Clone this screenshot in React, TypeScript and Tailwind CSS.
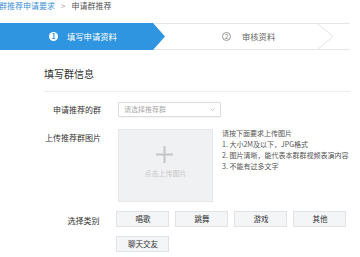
const categories = ["唱歌", "跳舞", "游戏", "其他", "聊天交友"];

const rules = [
  "请按下面要求上传图片",
  "1. 大小2M及以下，JPG格式",
  "2. 图片清晰，能代表本群群视频表演内容",
  "3. 不能有过多文字",
];

export default function App() {
  return (
    <div
      className="w-[360px] h-[257px] overflow-hidden bg-white text-[8px] text-[#333]"
      style={{ fontFamily: '"Noto Sans CJK SC", "Noto Sans", sans-serif' }}
    >
      {/* Breadcrumb */}
      <div className="h-[12px] flex items-center whitespace-nowrap leading-none">
        <span className="ml-[-1px] text-[#3d8fd8]">群推荐申请要求</span>
        <span className="ml-[6px] text-[#999]">&gt;</span>
        <span className="ml-[6px] text-[#555]">申请群推荐</span>
      </div>

      {/* Steps */}
      <div className="mt-[11px] w-[350px] h-[27px] border-y border-[#e6e6e6] flex">
        <div className="relative w-[153px] -my-px h-[27px] bg-[#2f95e0] flex items-center">
          <svg
            className="absolute left-[152px] top-0"
            width="14"
            height="27"
            viewBox="0 0 14 27"
          >
            <polygon points="0,0 1,0 13,13.5 1,27 0,27" fill="#2f95e0" />
          </svg>
          <span className="ml-[49px] w-[9px] h-[9px] rounded-full bg-white text-[#2f95e0] text-[7px] font-bold flex items-center justify-center leading-none">
            1
          </span>
          <span className="ml-[9px] text-white text-[8.3px] leading-none">填写申请资料</span>
        </div>
        <div className="relative flex-1 flex items-center">
          <span className="ml-[69px] w-[9px] h-[9px] rounded-full border border-[#999] text-[#888] text-[6.5px] flex items-center justify-center leading-none">
            2
          </span>
          <span className="ml-[11px] text-[#666] text-[8.3px] leading-none">审核资料</span>
          <svg
            className="absolute left-[165px] top-0"
            width="16"
            height="25"
            viewBox="0 0 16 25"
          >
            <polyline points="0,0 15,12.5 0,25" fill="none" stroke="#e3e3e3" strokeWidth="1" />
          </svg>
        </div>
      </div>

      {/* Section */}
      <div className="ml-[44px] w-[306px]">
        <div className="mt-[19px] text-[10px] leading-none text-[#333]">填写群信息</div>
        <div className="mt-[12px] border-t border-[#ececec]" />

        {/* Row: group select */}
        <div className="mt-[10px] flex items-center">
          <div className="w-[57px] text-right whitespace-nowrap text-[#333]">申请推荐的群</div>
          <div className="ml-[17px] w-[103px] h-[15px] border border-[#dcdcdc] rounded-[1px] flex items-center justify-between px-[5px] shadow-[0_1px_1px_rgba(0,0,0,0.04)]">
            <span className="text-[7px] text-[#aaa] leading-none">请选择推荐群</span>
            <svg width="5" height="3" viewBox="0 0 5 3">
              <polyline points="0.5,0.5 2.5,2.5 4.5,0.5" fill="none" stroke="#bbb" strokeWidth="0.8" />
            </svg>
          </div>
        </div>

        {/* Row: upload */}
        <div className="mt-[12px] flex items-start">
          <div className="w-[57px] mt-[3px] text-right whitespace-nowrap text-[#333]">上传推荐群图片</div>
          <div className="ml-[17px] w-[95px] h-[73px] bg-[#f0f1f3] border border-[#e6e7e9] flex flex-col items-center">
            <svg className="mt-[16px] ml-[-3px]" width="17" height="17" viewBox="0 0 17 17">
              <rect x="0" y="7.5" width="17" height="2" fill="#c4c5c7" />
              <rect x="7.5" y="0" width="2" height="17" fill="#c4c5c7" />
            </svg>
            <span className="mt-[7px] text-[7px] text-[#c8c8c8] leading-none">点击上传图片</span>
          </div>
          <div className="ml-[9px] mt-[-1px] whitespace-nowrap text-[7px] leading-[11px] text-[#555]">
            {rules.map((r) => (
              <div key={r}>{r}</div>
            ))}
          </div>
        </div>

        {/* Row: category */}
        <div className="mt-[9px] flex items-start">
          <div className="w-[57px] mt-[4px] text-right whitespace-nowrap text-[#333]">选择类别</div>
          <div className="ml-[17px] w-[240px] flex flex-wrap gap-x-[6px] gap-y-[9px]">
            {categories.map((c) => (
              <div
                key={c}
                className="w-[53px] h-[16px] bg-[#f4f5f7] border border-[#e2e3e5] flex items-center justify-center text-[7.5px] text-[#333] leading-none"
              >
                {c}
              </div>
            ))}
          </div>
        </div>
      </div>
    </div>
  );
}
